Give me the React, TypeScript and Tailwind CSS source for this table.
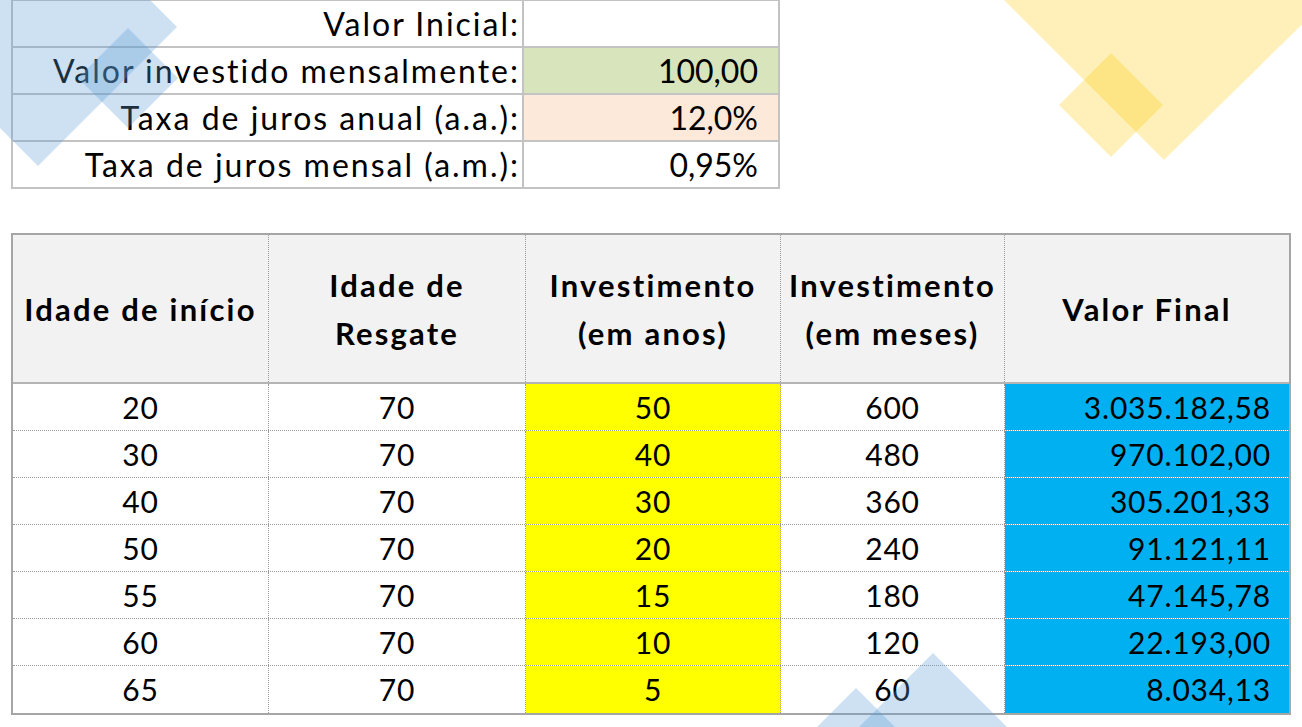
import React from "react"

const topRows = [
  { label: "Valor Inicial:", value: "", bg: "bg-white" },
  { label: "Valor investido mensalmente:", value: "100,00", bg: "bg-[#d8e4bc]" },
  { label: "Taxa de juros anual (a.a.):", value: "12,0%", bg: "bg-[#fde9d9]" },
  { label: "Taxa de juros mensal (a.m.):", value: "0,95%", bg: "bg-white" },
]

const rows = [
  ["20", "70", "50", "600", "3.035.182,58"],
  ["30", "70", "40", "480", "970.102,00"],
  ["40", "70", "30", "360", "305.201,33"],
  ["50", "70", "20", "240", "91.121,11"],
  ["55", "70", "15", "180", "47.145,78"],
  ["60", "70", "10", "120", "22.193,00"],
  ["65", "70", "5", "60", "8.034,13"],
]

const cols = "grid grid-cols-[256px_257px_255px_224px_284px]"

function Decorations() {
  return (
    <svg className="pointer-events-none absolute left-0 top-0" width="1302" height="727">
      <g fill="rgb(91,155,213)" fillOpacity="0.3">
        <polygon points="38,-112 177,27 38,166 -101,27" />
        <polygon points="128,28 178,78 128,128 78,78" />
        <polygon points="933,653 1033,753 933,853 833,753" />
        <polygon points="856,688 908,740 856,792 804,740" />
      </g>
      <g fill="rgb(253,204,20)" fillOpacity="0.3">
        <polygon points="1164,-177 1334,-7 1164,160 997,-7" />
        <polygon points="1111,53 1163,105 1111,157 1059,105" />
      </g>
    </svg>
  )
}

export default function App() {
  return (
    <div className="relative h-[727px] w-[1302px] overflow-hidden bg-white font-['Lato',sans-serif] text-[30px] text-black">
      {/* parameters */}
      <div className="-mt-px ml-[11px] grid w-[769px] grid-cols-[509px_254px] gap-[2px] bg-[#c3c3c3] p-[2px] text-[32px]">
        {topRows.map((r) => (
          <React.Fragment key={r.label}>
            <div className="flex h-[45px] items-center justify-end bg-white pr-[2px] tracking-[2px]">{r.label}</div>
            <div className={`flex h-[45px] items-center justify-end pr-[20px] ${r.bg}`}>{r.value}</div>
          </React.Fragment>
        ))}
      </div>

      {/* results */}
      <div className="ml-[11px] mt-[44px] w-[1280px] border-2 border-[#a6a6a6]">
        <div className={`${cols} h-[149px] border-b-2 border-[#b4b4b4] bg-[#f2f2f2] text-[31px] font-bold leading-[48px] tracking-[2.2px]`}>
          <div className="flex items-center justify-center border-r border-dotted border-[#9a9a9a] text-center">Idade de início</div>
          <div className="flex items-center justify-center border-r border-dotted border-[#9a9a9a] text-center">
            Idade de
            <br />
            Resgate
          </div>
          <div className="flex items-center justify-center border-r border-dotted border-[#9a9a9a] text-center">
            Investimento
            <br />
            (em anos)
          </div>
          <div className="flex items-center justify-center border-r border-dotted border-[#9a9a9a] text-center">
            Investimento
            <br />
            (em meses)
          </div>
          <div className="flex items-center justify-center text-center">Valor Final</div>
        </div>
        {rows.map((r, i) => (
          <div key={i} className={`${cols} h-[47px] tracking-[0.8px] ${i < rows.length - 1 ? "border-b border-dotted border-[#9a9a9a]" : ""}`}>
            <div className="flex items-center justify-center border-r border-dotted border-[#9a9a9a]">{r[0]}</div>
            <div className="flex items-center justify-center border-r border-dotted border-[#9a9a9a]">{r[1]}</div>
            <div className="flex items-center justify-center border-r border-dotted border-[#9a9a9a] bg-[#ffff00]">{r[2]}</div>
            <div className="flex items-center justify-center border-r border-dotted border-[#9a9a9a]">{r[3]}</div>
            <div className="flex items-center justify-end bg-[#00b0f0] pr-[18px]">{r[4]}</div>
          </div>
        ))}
      </div>

      <Decorations />
    </div>
  )
}
